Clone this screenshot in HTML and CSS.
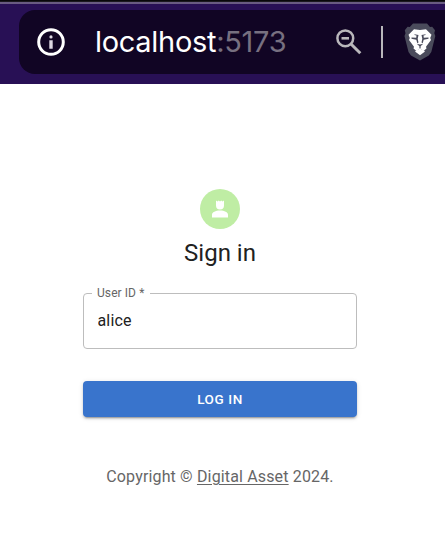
FILE: index.html
```
<!DOCTYPE html>
<html lang="en">
<head>
<meta charset="utf-8">
<title>Sign in</title>
<link rel="stylesheet" href="styles.css">
</head>
<body>
<header class="browser">
  <div class="address">
    <svg class="info" viewBox="0 0 28 28"><circle cx="14" cy="14" r="12.3" fill="none" stroke="#fff" stroke-width="3"/><circle cx="14" cy="8.9" r="1.6" fill="#ddd8e3"/><path d="M12.3 12.2h3.4v8.5h-3.4z" fill="#ddd8e3"/></svg>
    <div class="url">localhost<span class="port">:5173</span></div>
    <svg class="search" viewBox="0 0 26 26" fill="none" stroke="#b9b7bb"><circle cx="9.3" cy="9.3" r="7.9" stroke-width="2.5"/><path d="M15 15l9.3 9.3" stroke-width="3"/><path d="M5.5 9.3h7.5" stroke-width="2.6"/></svg>
    <div class="divider"></div>
    <svg class="shield" viewBox="0 0 32 38">
      <path d="M9 .6h14l3 3.400 2.200-.2 2.800 3.400-.7 3 1 2.800-4 16-2.500 3.500L16 37.500 7 32.500l-2.500-3.500L.5 13l1-2.800-.7-3 2.800-3.400 2.200.2z" fill="#4a4b5b"/>
      <path d="M10 6.300l6 .8 6-.8 5.500 5.500-1.300 3.200.8 2-5 6.800.5 1.700-3 2.500-3.500-2.800-3.500 2.800-3-2.500.5-1.700-5-6.800.8-2-1.300-3.200z" fill="#fff"/>
      <path d="M11.300 28.100l4.700-2.700 4.700 2.700v.7L16 32.300l-4.700-3.500z" fill="#fff"/>
      <path d="M10.500 11.200l4 .8-.8 3.700.8 3.800-1.200.7-1-3.500-4.800-1v-1.200l4.700.3.300-2.300-2-.5zM21.500 11.200l-4 .8.8 3.700-.8 3.800 1.200.7 1-3.500 4.800-1v-1.200l-4.700.3-.3-2.300 2-.5zM12.800 20.800l3.200.6 3.200-.6-2.600 2.400v1.800h-1.200v-1.800z" fill="#4a4b5b"/>
    </svg>
  </div>
</header>
<main class="signin">
  <div class="avatar"><svg viewBox="0 0 16 18" fill="#fff"><path d="M4 .5l1.500 1L6.700.5 8 1.500 9.300.5l1.200 1 1.500-1v5A4 4 0 0 1 4 5.500zM0 17.500v-2.800C0 12.300 3.500 10.500 8 10.500s8 1.800 8 4.200v2.800z"/></svg></div>
  <h1>Sign in</h1>
  <form>
    <fieldset class="field">
      <legend>User ID *</legend>
      <input type="text" value="alice" aria-label="User ID">
    </fieldset>
    <button type="button">LOG IN</button>
  </form>
  <p class="copyright">Copyright © <a href="#">Digital Asset</a> 2024.</p>
</main>
</body>
</html>
```
FILE: styles.css
```
* { box-sizing: border-box; }
body { margin: 0; background: #fff; color: #212121; font-family: Roboto, sans-serif; overflow: hidden; }
.browser {
  height: 84px;
  padding: 10px 0 0 19px;
  background: linear-gradient(#08070b 0 1px, #1b191f 1px 2px, #695b82 2px 4px, #281055 4px);
}
.address {
  display: flex;
  align-items: center;
  height: 64px;
  padding-left: 18px;
  background: #110524;
  border-radius: 16px 0 0 16px;
}
.info { width: 28px; height: 28px; flex: none; }
.url {
  width: 211px;
  margin-left: 30px;
  flex: none;
  color: #fff;
  font: 29px/36px Inter, sans-serif;
  letter-spacing: -.3px;
  white-space: nowrap;
}
.port { color: #777080; }
.search { width: 26px; height: 26px; margin-left: 30px; flex: none; }
.divider { width: 2px; height: 32px; margin-left: 19px; flex: none; background: #b9b7bb; }
.shield { width: 32px; height: 38px; margin-left: 21px; flex: none; }
.signin {
  display: flex;
  flex-direction: column;
  align-items: center;
  width: 274px;
  margin: 105px 0 0 83px;
}
.avatar {
  display: flex;
  align-items: center;
  justify-content: center;
  width: 40px;
  height: 40px;
  border-radius: 50%;
  background: #bfeda4;
}
.avatar svg { width: 16px; height: 18px; }
h1 { margin: 8px 0 0; font-size: 24px; line-height: 32px; font-weight: 400; }
form { width: 100%; margin-top: 18px; }
.field {
  height: 62px;
  margin: 0;
  padding: 0 13px;
  border: 1px solid #bdbdbd;
  border-radius: 4px;
}
legend { margin-left: -5px; padding: 0 6px 0 5px; color: #666; font-size: 12px; line-height: 12px; letter-spacing: .08px; }
input {
  display: block;
  width: 100%;
  height: 24px;
  margin-top: 10px;
  padding: 0 0 0 .5px;
  border: 0;
  outline: 0;
  color: #212121;
  font: 16px/24px Roboto, sans-serif;
  letter-spacing: .15px;
}
button {
  display: block;
  width: 100%;
  height: 36px;
  margin-top: 32px;
  padding: 0 0 1px;
  border: 0;
  border-radius: 4px;
  background: #3974cc;
  color: #fff;
  font: 500 13.5px/24px Roboto, sans-serif;
  letter-spacing: .6px;
  box-shadow: 0 3px 1px -2px #0003, 0 2px 2px #0002, 0 1px 5px #0002;
}
.copyright { margin: 48px 0 0; color: #666; font-size: 16px; line-height: 24px; letter-spacing: .15px; white-space: nowrap; }
a { color: inherit; text-underline-offset: 2px; text-decoration-thickness: 1px; }
```
